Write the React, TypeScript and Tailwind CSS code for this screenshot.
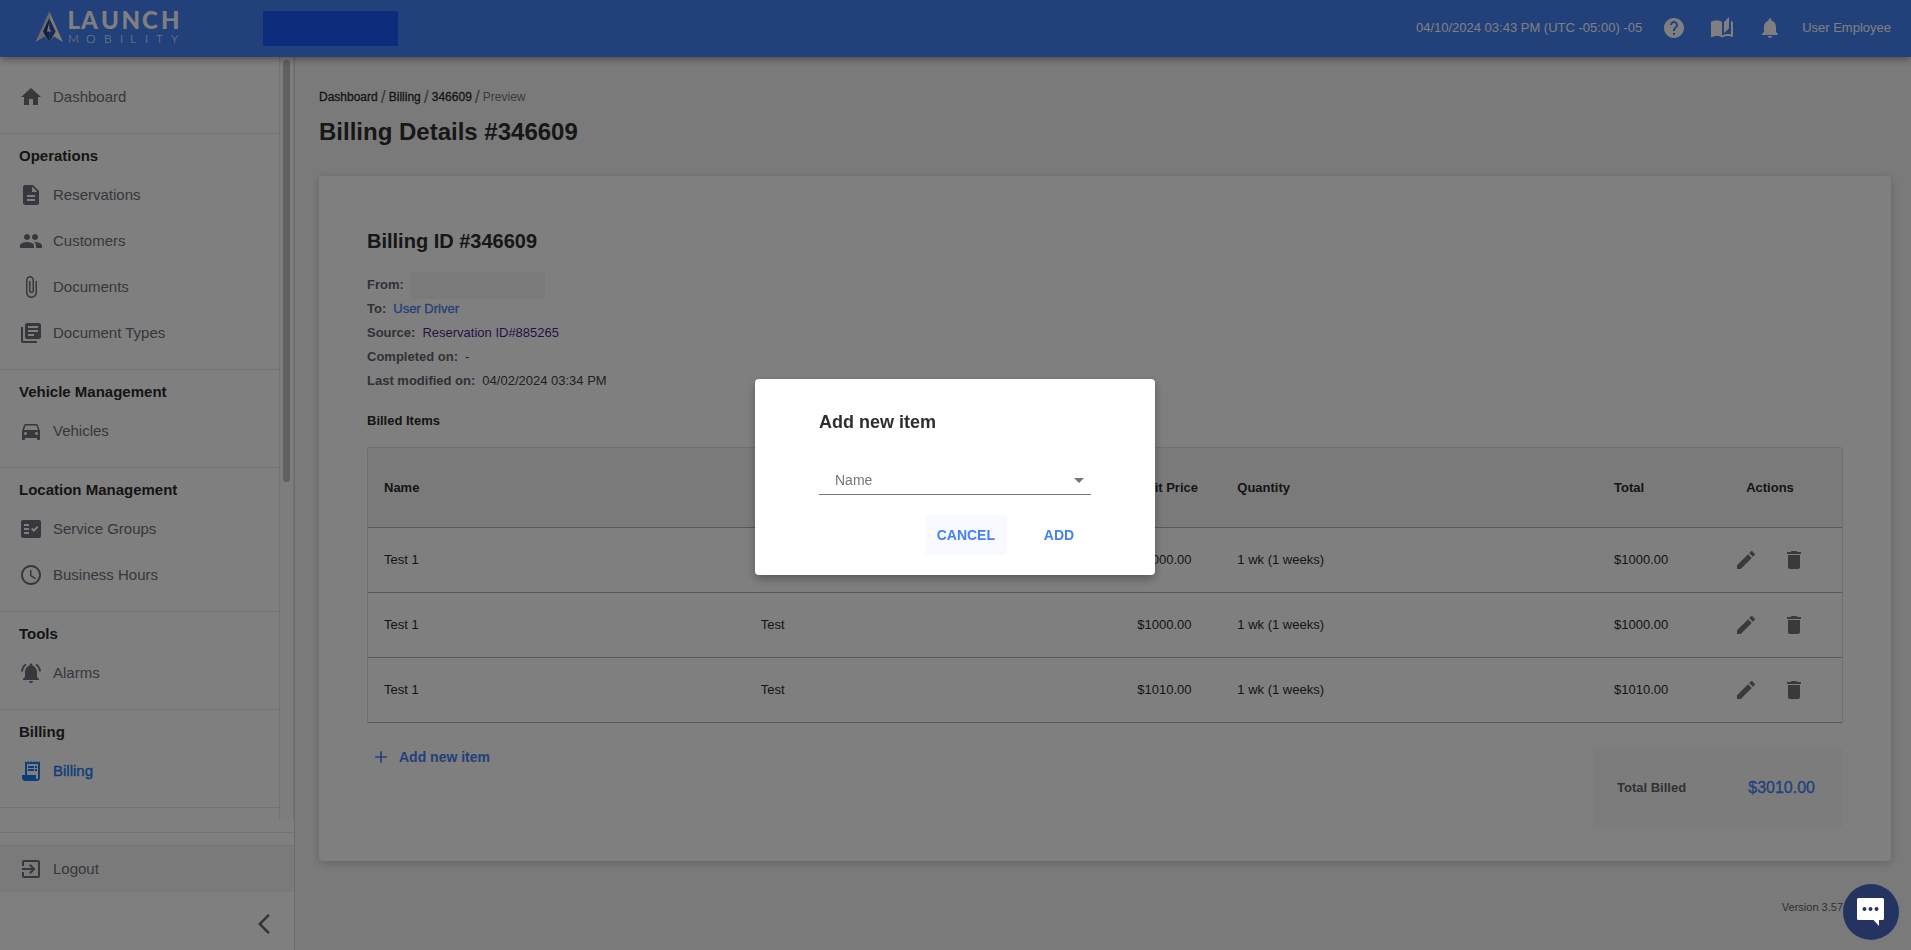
import { useState } from 'react'
import type { IconType } from 'react-icons'
import {
  MdAccessTime,
  MdAdd,
  MdArrowBackIosNew,
  MdArrowDropDown,
  MdAttachFile,
  MdAutoStories,
  MdDelete,
  MdDescription,
  MdDirectionsCar,
  MdEdit,
  MdExitToApp,
  MdFactCheck,
  MdHelp,
  MdHome,
  MdLibraryBooks,
  MdNotifications,
  MdNotificationsActive,
  MdPeople,
  MdReceiptLong,
} from 'react-icons/md'

type NavItem = { label: string; icon: IconType; active?: boolean }
type NavSection = { title: string; items: NavItem[] }
type BilledItem = {
  id: number
  name: string
  description: string
  unitPrice: string
  quantity: string
  total: string
}

const sections: NavSection[] = [
  {
    title: 'Operations',
    items: [
      { label: 'Reservations', icon: MdDescription },
      { label: 'Customers', icon: MdPeople },
      { label: 'Documents', icon: MdAttachFile },
      { label: 'Document Types', icon: MdLibraryBooks },
    ],
  },
  {
    title: 'Vehicle Management',
    items: [{ label: 'Vehicles', icon: MdDirectionsCar }],
  },
  {
    title: 'Location Management',
    items: [
      { label: 'Service Groups', icon: MdFactCheck },
      { label: 'Business Hours', icon: MdAccessTime },
    ],
  },
  {
    title: 'Tools',
    items: [{ label: 'Alarms', icon: MdNotificationsActive }],
  },
  {
    title: 'Billing',
    items: [{ label: 'Billing', icon: MdReceiptLong, active: true }],
  },
]

const billedItems: BilledItem[] = [
  { id: 1, name: 'Test 1', description: 'Test', unitPrice: '$1000.00', quantity: '1 wk (1 weeks)', total: '$1000.00' },
  { id: 2, name: 'Test 1', description: 'Test', unitPrice: '$1000.00', quantity: '1 wk (1 weeks)', total: '$1000.00' },
  { id: 3, name: 'Test 1', description: 'Test', unitPrice: '$1010.00', quantity: '1 wk (1 weeks)', total: '$1010.00' },
]

function Logo() {
  return (
    <svg width="148" height="57" viewBox="0 0 148 57" role="img" aria-label="Launch Mobility">
      {/* arrow emblem */}
      <path d="M14.300 11.500 L28 42 L19 36.500 L14.300 42 L14.300 11.500Z" fill="#faf6ee" />
      <path d="M14.300 11.500 L0.600 42 L9.600 36.500 L14.300 42 L14.300 11.500Z" fill="#d6d6da" />
      <path d="M14.300 18 L8 31.500 L11 37 L14.300 42Z" fill="#1f3f88" />
      <path d="M14.300 18 L20.600 31.500 L17.600 37 L14.300 42Z" fill="#2b55ad" />
      <path d="M13.800 24 L12 31.500 H16.800 L14.600 29.500Z" fill="#faf6ee" />
      <text
        x="32.500 46 66 86.500 107 126"
        y="29"
        fontFamily="Lato, sans-serif"
        fontWeight="900"
        fontSize="24"
        fill="#ffffff"
      >
        LAUNCH
      </text>
      <text
        x="33 51 69 85 95 110 121 136"
        y="43"
        fontFamily="Lato, sans-serif"
        fontWeight="300"
        fontSize="12"
        fill="#ffffff"
      >
        MOBILITY
      </text>
    </svg>
  )
}

function Header() {
  return (
    <header className="relative z-10 flex h-[57px] shrink-0 items-center bg-[#4481f4] pr-5 pl-[35px] text-[13px] text-white shadow-[0_2px_8px_rgba(0,0,0,0.4)]">
      <Logo />
      <div className="ml-20 h-[35px] w-[135px] bg-[#1a5af8]" />
      <div className="ml-auto flex items-center pb-0.5">
        <span>04/10/2024 03:43 PM (UTC -05:00) -05</span>
        <div className="mx-5 flex gap-6">
          <button type="button" aria-label="Help">
            <MdHelp size={24} />
          </button>
          <button type="button" aria-label="Guides">
            <MdAutoStories size={24} />
          </button>
          <button type="button" aria-label="Notifications">
            <MdNotifications size={24} />
          </button>
        </div>
        <span>User Employee</span>
      </div>
    </header>
  )
}

function NavLink({ item }: { item: NavItem }) {
  const Icon = item.icon
  return (
    <a
      href="#"
      className={
        item.active
          ? 'flex h-[46px] items-center gap-2.5 pl-[19px] text-[15px] text-[#1c7df2] [-webkit-text-stroke:0.4px]'
          : 'flex h-[46px] items-center gap-2.5 pl-[19px] text-[15px] text-[#6e6e7c]'
      }
    >
      <Icon size={24} />
      {item.label}
    </a>
  )
}

function Sidebar() {
  return (
    <aside className="flex w-[295px] shrink-0 flex-col border-r border-[#d8d8d8] bg-white">
      <div className="flex min-h-0 flex-1">
        <nav className="flex-1 overflow-hidden">
          <div className="pt-[17px] pb-[13px]">
            <NavLink item={{ label: 'Dashboard', icon: MdHome }} />
          </div>
          {sections.map(section => (
            <div key={section.title} className="border-t border-[#e6e6e6] pt-3 pb-[13px]">
              <h2 className="mb-1.5 pl-[19px] text-[15px] leading-5 font-bold text-[#2b2b2b]">{section.title}</h2>
              {section.items.map(item => (
                <NavLink key={item.label} item={item} />
              ))}
            </div>
          ))}
          <div className="border-t border-[#e6e6e6]" />
        </nav>
        {/* scroll track */}
        <div className="w-[15px] border-x border-[#e6e6e6] bg-[#fbfbfb] px-[3px] pt-[3px]">
          <div className="h-[422px] rounded-full bg-[#c1c1c1]" />
        </div>
      </div>
      <div className="shrink-0 pt-3">
        <div className="border-t border-[#e6e6e6] pt-3">
          <div className="border-t border-[#e6e6e6] bg-[#f5f5f5]">
            <NavLink item={{ label: 'Logout', icon: MdExitToApp }} />
          </div>
        </div>
        <div className="flex h-[58px] items-center justify-end pt-1.5 pr-[18px] text-[#666666]">
          <button type="button" aria-label="Collapse menu">
            <MdArrowBackIosNew size={24} />
          </button>
        </div>
      </div>
    </aside>
  )
}

function Breadcrumbs() {
  return (
    <nav className="flex items-center gap-[3px] text-xs leading-5 text-[#2b2b2b]" aria-label="Breadcrumb">
      <a href="#" className="[-webkit-text-stroke:0.3px]">Dashboard</a>
      <span className="text-lg leading-5 text-[#757575]">/</span>
      <a href="#" className="[-webkit-text-stroke:0.3px]">Billing</a>
      <span className="text-lg leading-5 text-[#757575]">/</span>
      <a href="#" className="[-webkit-text-stroke:0.3px]">346609</a>
      <span className="text-lg leading-5 text-[#757575]">/</span>
      <span className="text-[#757575]">Preview</span>
    </nav>
  )
}

function BillingMeta() {
  return (
    <dl className="mt-[18px] text-[13px] leading-6 text-[#424242]">
      <div className="flex h-6 items-center gap-[7px]">
        <dt className="font-bold text-[#62626e]">From:</dt>
        <dd className="h-[27px] w-[134px] bg-[#f5f5f5]" />
      </div>
      <div className="flex gap-[7px]">
        <dt className="font-bold text-[#62626e]">To:</dt>
        <dd>
          <a href="#" className="text-[#4481f4] [-webkit-text-stroke:0.3px]">User Driver</a>
        </dd>
      </div>
      <div className="flex gap-[7px]">
        <dt className="font-bold text-[#62626e]">Source:</dt>
        <dd>
          <a href="#" className="text-[#551a8b]">Reservation ID#885265</a>
        </dd>
      </div>
      <div className="flex gap-[7px]">
        <dt className="font-bold text-[#62626e]">Completed on:</dt>
        <dd>-</dd>
      </div>
      <div className="flex gap-[7px]">
        <dt className="font-bold text-[#62626e]">Last modified on:</dt>
        <dd>04/02/2024 03:34 PM</dd>
      </div>
    </dl>
  )
}

function BilledItemsTable() {
  return (
    <div className="mt-4 overflow-hidden rounded-t border-x border-t border-[#dcdcdc]">
      <table className="w-full table-fixed text-left text-[13px] text-[#2b2b2b]">
        <thead>
          <tr className="h-[79px] border-b border-[#b0b0b0] bg-[#f5f5f5]">
            <th className="px-4">Name</th>
            <th className="px-4">Description</th>
            <th className="w-[100px] pl-4">Unit Price</th>
            <th className="px-4">Quantity</th>
            <th className="w-[100px] px-4">Total</th>
            <th className="w-36 text-center">Actions</th>
          </tr>
        </thead>
        <tbody>
          {billedItems.map(item => (
            <tr key={item.id} className="h-[65px] border-b border-[#b0b0b0]">
              <td className="px-4">{item.name}</td>
              <td className="px-4">{item.description}</td>
              <td className="pl-4">{item.unitPrice}</td>
              <td className="px-4">{item.quantity}</td>
              <td className="px-4">{item.total}</td>
              <td>
                <div className="flex justify-center gap-6 text-[#757575]">
                  <button type="button" aria-label="Edit item">
                    <MdEdit size={24} />
                  </button>
                  <button type="button" aria-label="Delete item">
                    <MdDelete size={24} />
                  </button>
                </div>
              </td>
            </tr>
          ))}
        </tbody>
      </table>
    </div>
  )
}

function BillingCard({ onAdd }: { onAdd: () => void }) {
  return (
    <section className="mt-7 rounded bg-white px-12 pt-[51px] pb-8 shadow-[0_2px_8px_rgba(60,64,80,0.25)]">
      <h2 className="text-xl leading-7 font-bold text-[#2e2e2e]">Billing ID #346609</h2>
      <BillingMeta />
      <h3 className="mt-[18px] text-[13px] leading-5 font-bold text-[#2b2b2b]">Billed Items</h3>
      <BilledItemsTable />
      <div className="mt-6 flex items-start justify-between">
        <button
          type="button"
          onClick={onAdd}
          className="flex items-center gap-2 pl-1 text-sm leading-5 font-bold text-[#4481f4]"
        >
          <MdAdd size={20} />
          Add new item
        </button>
        <div className="flex h-[82px] w-[250px] items-center justify-between bg-[#f9f9f9] pr-7 pl-6">
          <span className="text-[13px] font-bold text-[#62626e]">Total Billed</span>
          <span className="text-base text-[#4481f4] [-webkit-text-stroke:0.3px]">$3010.00</span>
        </div>
      </div>
    </section>
  )
}

function AddItemDialog({ onClose }: { onClose: () => void }) {
  return (
    <div className="fixed inset-0 z-20 flex items-center justify-center bg-black/50 pt-1 pr-px">
      <div
        role="dialog"
        aria-modal="true"
        aria-labelledby="add-item-title"
        className="w-[400px] rounded bg-white px-16 pt-[30px] pb-5 shadow-[0_4px_10px_rgba(0,0,0,0.3)]"
      >
        <h2 id="add-item-title" className="text-lg leading-[26px] font-bold text-[#2e2e2e]">
          Add new item
        </h2>
        <div className="relative mt-[31px]">
          <select
            aria-label="Name"
            defaultValue=""
            className="h-[29px] w-full appearance-none border-b border-[#757575] bg-transparent px-4 text-sm text-[#757575] opacity-100 outline-none"
          >
            <option value="" disabled>
              Name
            </option>
            <option value="test1">Test 1</option>
          </select>
          <MdArrowDropDown size={24} className="pointer-events-none absolute top-0.5 right-0 text-[#757575]" />
        </div>
        <div className="mt-5 flex justify-end gap-5 text-sm font-bold text-[#4481f4]">
          <button type="button" onClick={onClose} className="h-10 rounded bg-[#f8faff] px-3">
            CANCEL
          </button>
          <button type="button" className="h-10 w-16 rounded">
            ADD
          </button>
        </div>
      </div>
    </div>
  )
}

function ChatButton() {
  return (
    <button
      type="button"
      aria-label="Open chat"
      className="fixed right-3 bottom-2.5 z-30 flex size-14 items-center justify-center rounded-full bg-[#253361]"
    >
      <svg width="28" height="28" viewBox="0 0 28 28">
        <path d="M1.500 0 H25.500 Q27 0 27 1.500 V20.500 Q27 22 25.500 22 H22 V28 L16.500 22 H1.500 Q0 22 0 20.500 V1.500 Q0 0 1.500 0Z" fill="#ffffff" />
        <circle cx="7.500" cy="11" r="2" fill="#253361" />
        <circle cx="13.500" cy="11" r="2" fill="#253361" />
        <circle cx="19.500" cy="11" r="2" fill="#253361" />
      </svg>
    </button>
  )
}

export default function App() {
  const [dialogOpen, setDialogOpen] = useState(true)

  return (
    <div className="flex h-screen flex-col overflow-hidden bg-[#f5f5f5] font-['Liberation_Sans',Arial,sans-serif]">
      <Header />
      <div className="flex min-h-0 flex-1">
        <Sidebar />
        <main className="min-w-0 flex-1 overflow-hidden pt-[30px] pr-5 pl-6">
          <Breadcrumbs />
          <h1 className="mt-[9px] text-2xl leading-8 font-bold text-[#2e2e2e]">Billing Details #346609</h1>
          <BillingCard onAdd={() => setDialogOpen(true)} />
          <footer className="mt-9 pr-12 text-right text-[11px] leading-5 text-[#616161]">Version 3.57</footer>
        </main>
      </div>
      {dialogOpen && <AddItemDialog onClose={() => setDialogOpen(false)} />}
      <ChatButton />
    </div>
  )
}
